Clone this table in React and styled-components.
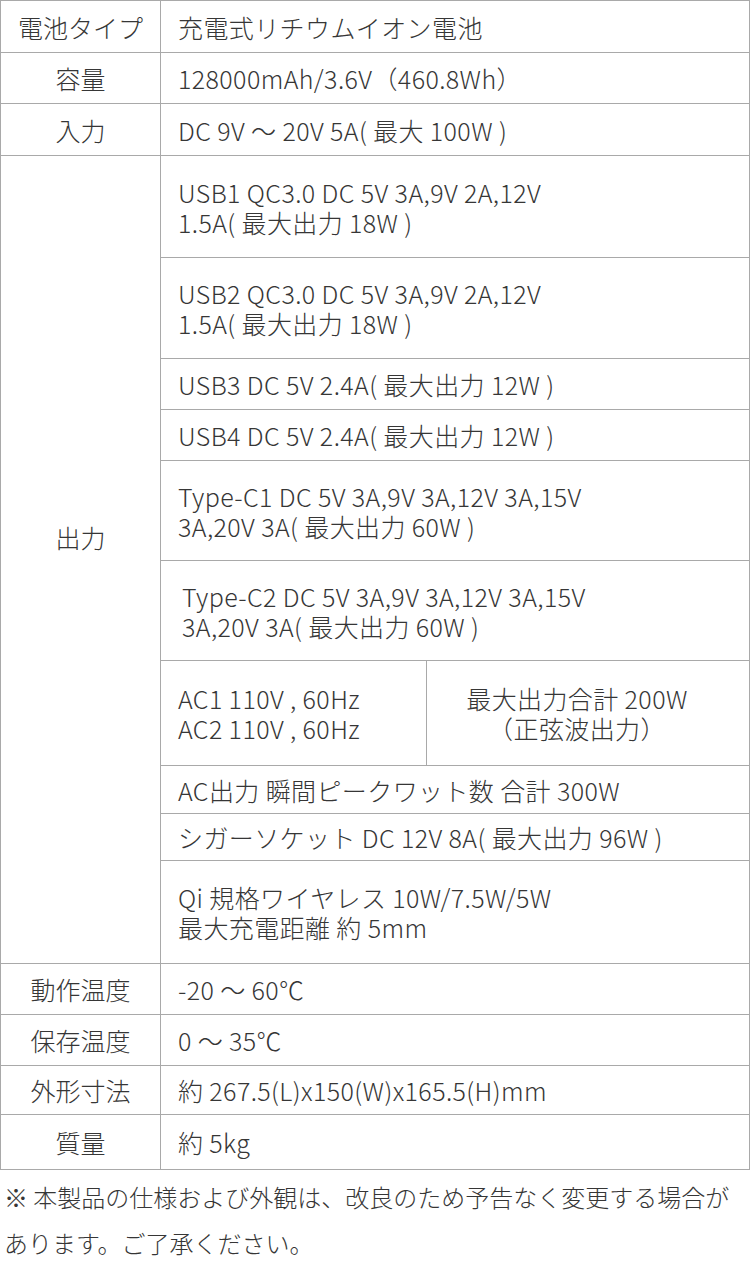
import React from "react";
import styled, { createGlobalStyle } from "styled-components";

const LINE = "#a9a9a9";
const INK = "#363636";

const Global = createGlobalStyle`
  html, body { margin: 0; padding: 0; background: #fff; }
  body {
    font-family: "Noto Sans CJK JP", "Noto Sans", sans-serif;
    font-weight: 300;
    color: ${INK};
    -webkit-font-smoothing: antialiased;
  }
`;

const Page = styled.div`
  width: 750px;
`;

const Table = styled.div`
  box-sizing: border-box;
  width: 750px;
  border-top: 1px solid ${LINE};
  border-left: 1px solid ${LINE};
  border-right: 1px solid ${LINE};
`;

const Row = styled.div`
  display: grid;
  grid-template-columns: 160px 1fr;
  border-bottom: 1px solid ${LINE};
`;

const Label = styled.div`
  box-sizing: border-box;
  border-right: 1px solid ${LINE};
  display: flex;
  align-items: center;
  justify-content: center;
  font-size: 25px;
  line-height: 30px;
  padding-bottom: ${(p) => p.$shift || 0}px;
  white-space: nowrap;
`;

const Value = styled.div`
  box-sizing: border-box;
  display: flex;
  align-items: center;
  min-height: ${(p) => p.$h}px;
  padding: 0 10px 0 ${(p) => p.$indent || 17}px;
  font-size: 25px;
  line-height: 30px;
  letter-spacing: 0.4px;
  white-space: nowrap;
`;

const Sub = styled.div`
  display: flex;
  flex-direction: column;
`;

const SubRow = styled.div`
  border-bottom: 1px solid ${LINE};
  &:last-child { border-bottom: none; }
`;

const Split = styled.div`
  display: grid;
  grid-template-columns: 266px 1fr;
  border-bottom: 1px solid ${LINE};
`;

const SplitLeft = styled(Value)`
  border-right: 1px solid ${LINE};
`;

const SplitRight = styled(Value)`
  justify-content: center;
  text-align: center;
  padding: 0 22px 0 0;
`;

const Note = styled.p`
  margin: 4px 0 0 4px;
  font-size: 24px;
  line-height: 46px;
  color: ${INK};
`;

const top = [
  { label: "電池タイプ", value: "充電式リチウムイオン電池", h: 51 },
  { label: "容量", value: "128000mAh/3.6V（460.8Wh）", h: 50 },
  { label: "入力", value: "DC 9V ～ 20V 5A( 最大 100W )", h: 51 },
];

const bottom = [
  { label: "動作温度", value: "-20 ～ 60℃", h: 50 },
  { label: "保存温度", value: "0 ～ 35℃", h: 50 },
  { label: "外形寸法", value: "約 267.5(L)x150(W)x165.5(H)mm", h: 48 },
  { label: "質量", value: "約 5kg", h: 54 },
];

const outputsA = [
  { lines: ["USB1 QC3.0 DC 5V 3A,9V 2A,12V", "1.5A( 最大出力 18W )"], h: 101 },
  { lines: ["USB2 QC3.0 DC 5V 3A,9V 2A,12V", "1.5A( 最大出力 18W )"], h: 100 },
  { lines: ["USB3 DC 5V 2.4A( 最大出力 12W )"], h: 50 },
  { lines: ["USB4 DC 5V 2.4A( 最大出力 12W )"], h: 50 },
  { lines: ["Type-C1 DC 5V 3A,9V 3A,12V 3A,15V", "3A,20V 3A( 最大出力 60W )"], h: 99 },
  { lines: ["Type-C2 DC 5V 3A,9V 3A,12V 3A,15V", "3A,20V 3A( 最大出力 60W )"], h: 99, indent: 21 },
];

const outputsB = [
  { lines: ["AC出力 瞬間ピークワット数 合計 300W"], h: 47 },
  { lines: ["シガーソケット DC 12V 8A( 最大出力 96W )"], h: 46 },
  { lines: ["Qi 規格ワイヤレス 10W/7.5W/5W", "最大充電距離 約 5mm"], h: 102 },
];

const Lines = ({ lines }) => (
  <div>
    {lines.map((l, i) => (
      <div key={i}>{l}</div>
    ))}
  </div>
);

export default function App() {
  return (
    <Page>
      <Global />
      <Table>
        {top.map((r) => (
          <Row key={r.label}>
            <Label>{r.label}</Label>
            <Value $h={r.h}>{r.value}</Value>
          </Row>
        ))}
        <Row>
          <Label $shift={46}>出力</Label>
          <Sub>
            {outputsA.map((o, i) => (
              <SubRow key={i}>
                <Value $h={o.h} $indent={o.indent}>
                  <Lines lines={o.lines} />
                </Value>
              </SubRow>
            ))}
            <Split>
              <SplitLeft $h={104}>
                <Lines lines={["AC1 110V , 60Hz", "AC2 110V , 60Hz"]} />
              </SplitLeft>
              <SplitRight $h={104}>
                <Lines lines={["最大出力合計 200W", "（正弦波出力）"]} />
              </SplitRight>
            </Split>
            {outputsB.map((o, i) => (
              <SubRow key={i}>
                <Value $h={o.h}>
                  <Lines lines={o.lines} />
                </Value>
              </SubRow>
            ))}
          </Sub>
        </Row>
        {bottom.map((r) => (
          <Row key={r.label}>
            <Label>{r.label}</Label>
            <Value $h={r.h}>{r.value}</Value>
          </Row>
        ))}
      </Table>
      <Note>
        ※ 本製品の仕様および外観は、改良のため予告なく変更する場合が
        <br />
        あります。ご了承ください。
      </Note>
    </Page>
  );
}
